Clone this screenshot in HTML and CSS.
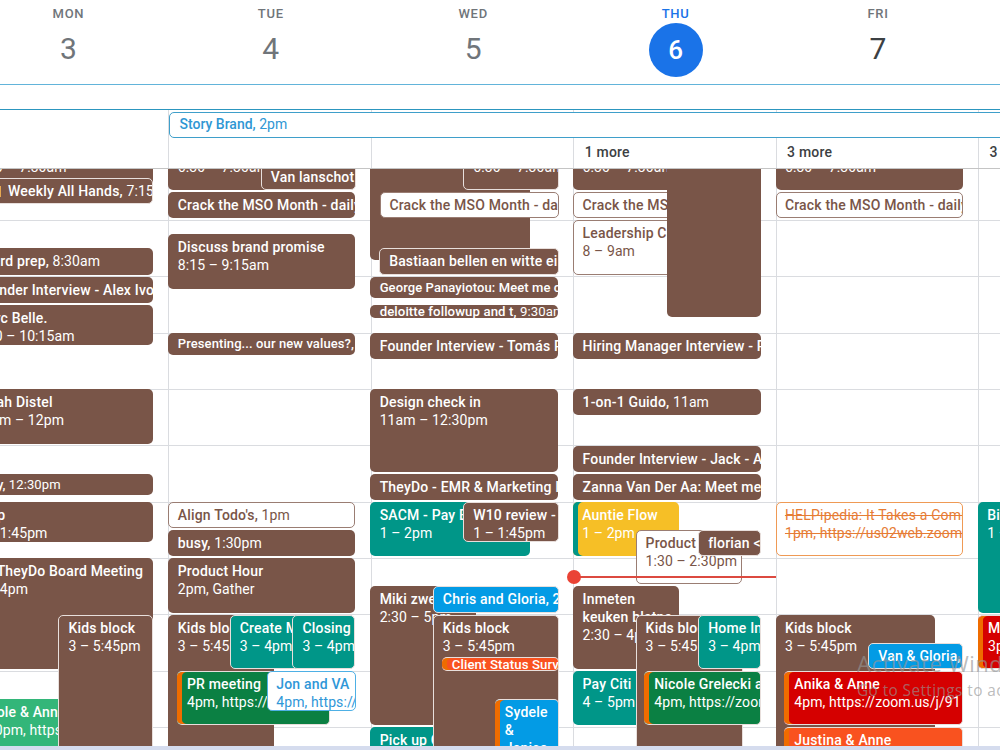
FILE: index.html
```html
<!DOCTYPE html>
<html lang="en">
<head>
    <meta charset="UTF-8">
    <meta name="viewport" content="width=device-width, initial-scale=1.0">
    <title>Calendar - Week</title>
    <link rel="stylesheet" href="styles.css">
</head>
<body>
    <div class="calendar">
        <!-- Day names and dates -->
        <header class="week days">
            <div class="day-head past"><span class="name">MON</span><span class="date">3</span></div>
            <div class="day-head past"><span class="name">TUE</span><span class="date">4</span></div>
            <div class="day-head past"><span class="name">WED</span><span class="date">5</span></div>
            <div class="day-head today"><span class="name">THU</span><span class="date">6</span></div>
            <div class="day-head"><span class="name">FRI</span><span class="date">7</span></div>
        </header>

        <!-- All-day events -->
        <section class="allday">
            <div class="allday-bar"></div>
            <div class="allday-rows">
                <div class="allday-event"><b>Story Brand,</b> 2pm</div>
                <div class="week allday-cells">
                    <div class="cell"></div>
                    <div class="cell"></div>
                    <div class="cell"></div>
                    <div class="cell"><span class="more">1 more</span></div>
                    <div class="cell"><span class="more">3 more</span></div>
                    <div class="cell"><span class="more">3 more</span></div>
                </div>
            </div>
        </section>

        <!-- Hour grid, filled by script.js -->
        <main class="week grid" id="grid"></main>
        <div class="scrollbar"></div>
    </div>

    <div class="watermark">
        <div class="watermark-title">Activate Windows</div>
        <div class="watermark-text">Go to Settings to activate Windows.</div>
    </div>

    <script src="script.js"></script>
</body>
</html>
```

FILE: styles.css
```css
/* General Styles */
* {
    box-sizing: border-box;
}

body {
    font-family: Roboto, "Liberation Sans", sans-serif;
    font-size: 14px;
    margin: 0;
    background: #fff;
    color: #3c4043;
    overflow: hidden;
}

.calendar {
    display: flex;
    flex-direction: column;
    height: 750px;
    overflow: hidden;
}

/* Six day columns, Monday is partly scrolled out */
.week {
    display: grid;
    grid-template-columns: repeat(6, 202.4px);
    margin-left: -34px;
    width: 1215px;
}

/* Header */
.days {
    height: 84px;
    flex: none;
}

.day-head {
    display: flex;
    flex-direction: column;
    align-items: center;
    padding: 6px 0 0 2.4px;
}

.name {
    font-size: 13px;
    font-weight: 500;
    line-height: 15px;
    letter-spacing: 0.7px;
    color: #70757a;
}

.date {
    width: 54px;
    height: 54px;
    margin-top: 2px;
    border-radius: 50%;
    font-size: 30px;
    line-height: 52px;
    text-align: center;
}

.past .date {
    color: #70757a;
}

.today .name {
    color: #1a73e8;
}

.today .date {
    background: #1a73e8;
    color: #fff;
    font-size: 26px;
    font-weight: 500;
    line-height: 54px;
}

/* All-day area */
.allday {
    flex: none;
    height: 85px;
    border-bottom: 1px solid #c4c4c4;
}

.allday-bar {
    height: 26px;
    border-top: 1px solid #62b4da;
    border-bottom: 1px solid #2c96bf;
}

.allday-rows {
    display: grid;
    grid-template-columns: 169px 1fr;
    grid-template-rows: 2px 26px 30px;
}

.allday-cells {
    grid-row: 1 / 4;
    grid-column: 1 / 3;
}

.cell {
    display: flex;
    align-items: flex-end;
    padding: 0 0 6px 10.5px;
    border-left: 1px solid #dadce0;
}

.more {
    font-weight: 500;
    line-height: 19px;
    letter-spacing: 0.2px;
}

.allday-event {
    grid-row: 2;
    grid-column: 2;
    z-index: 1;
    margin-right: -10px;
    padding-left: 9.5px;
    border: 1px solid #3f9fca;
    border-radius: 5px;
    background: #fff;
    color: #2f97d4;
    line-height: 23px;
}

b {
    font-weight: 500;
}

/* Hour grid */
.grid {
    flex: 1;
    min-height: 0;
    overflow: hidden;
}

.day {
    position: relative;
    border-left: 1px solid #dadce0;
    background: repeating-linear-gradient(#dadce0 0 1px, transparent 1px 56.35px) 0 51px no-repeat;
    min-width: 0;
}

/* Events overlap, so they are placed by time */
.event {
    position: absolute;
    padding: 4px 0 0 9.3px;
    border-radius: 5px;
    overflow: hidden;
    white-space: nowrap;
    line-height: 18px;
    letter-spacing: 0.1px;
    color: #fff;
    background: #795548;
}

.event b {
    display: block;
    letter-spacing: 0.18px;
}

.event.inline b {
    display: inline;
}

.event.small {
    font-size: 13px;
    line-height: 19px;
    padding-top: 1px;
}

.event.tiny {
    font-size: 13.2px;
    line-height: 13px;
    padding-top: 0;
}

.event.small b,
.event.tiny b {
    letter-spacing: 0.1px;
}

.event.wrap {
    white-space: normal;
}

.event.ring {
    border: 1px solid #e8dfdc;
    padding: 3px 0 0 9px;
}

.event.strip {
    border: 1px solid #e8dfdc;
    border-left: none;
    padding: 3px 0 0 10px;
    box-shadow: inset 5px 0 #ef6c00;
}

.event.strip.tiny {
    padding-top: 0;
}

.event.strip-teal {
    border: none;
    padding: 4px 0 0 9px;
    box-shadow: inset 5px 0 #009688;
}

/* Event colors */
.teal {
    background: #009688;
}

.green {
    background: #0b8043;
}

.mint {
    background: #33b679;
}

.blue {
    background: #039be5;
}

.red {
    background: #d50000;
}

.orange {
    background: #f9521f;
}

.yellow {
    background: #f6bf26;
}

/* Invitations that are not answered yet */
.event.open {
    background: #fff;
    border: 1px solid #9a7d73;
    color: #795548;
    padding: 3px 0 0 8.3px;
}

.event.open.open-blue {
    border-color: #4eb0e5;
    color: #2f97d8;
}

.event.open.declined {
    border-color: #ef9a55;
    color: #e67c35;
    text-decoration: line-through;
}

.event.declined b {
    font-weight: 400;
    letter-spacing: 0.2px;
}

.badge {
    display: inline-block;
    width: 25px;
    height: 11px;
    margin-right: 7px;
    vertical-align: -1px;
    background: #e8a951;
}

/* Current time */
.now {
    position: absolute;
    left: 0;
    right: 0;
    height: 2px;
    background: #dc4a40;
}

.now::before {
    content: "";
    position: absolute;
    left: -7px;
    top: -6px;
    width: 14px;
    height: 14px;
    border-radius: 50%;
    background: #ea4335;
}

.grid .day:nth-child(4) {
    z-index: 1;
}

.scrollbar {
    flex: none;
    height: 4px;
    background: #d5dcee;
}

/* System overlay */
.watermark {
    position: absolute;
    left: 857px;
    top: 649px;
    width: 143px;
    overflow: hidden;
    white-space: nowrap;
    font-family: "Open Sans", sans-serif;
    color: rgba(150, 150, 150, 0.65);
}

.watermark-title {
    font-size: 22px;
    line-height: 28px;
    letter-spacing: 0.5px;
}

.watermark-text {
    font-size: 15.4px;
    line-height: 28px;
    letter-spacing: 0.4px;
}
```

FILE: script.js
```js
const HOUR = 56.35;
const FIRST_LINE = 8;    // the first visible hour line is 8am
const FIRST_TOP = 51.2;

// [start, end, left, width, classes, title, details]
const days = [
    [
        [6.5, 7.5, 0, 187, "", "Standup", "6:30 – 7:30am"],
        [7.25, 7.75, 0, 187, "ring inline", "<i class='badge'></i>Weekly All Hands,", "7:15am"],
        [8.5, 9, 0, 187, "inline", "Board prep,", "8:30am"],
        [9, 9.5, 0, 187, "inline", "Founder Interview - Alex Ivo", ""],
        [9.5, 10.25, 0, 187, "", "Marc Belle.", "9:30 – 10:15am"],
        [11, 12, 0, 187, "", "Sarah Distel", "11am – 12pm"],
        [12.5, 12.92, 0, 187, "inline small", "busy,", "12:30pm"],
        [13, 13.75, 0, 187, "", "Prep", "1 – 1:45pm"],
        [14, 16, 0, 187, "", "Q4 TheyDo Board Meeting", "2 – 4pm"],
        [16.5, 18, 0, 150, "mint", "Nicole &amp; Anne", "4:30pm, https://zoom.us"],
        [15, 17.75, 92.4, 95, "ring", "Kids block", "3 – 5:45pm"]
    ],
    [
        [6.5, 7.5, 0, 187, "", "Standup", "6:30 – 7:30am"],
        [7, 7.5, 92.4, 95, "ring inline", "Van lanschot", ""],
        [7.5, 8, 0, 187, "inline", "Crack the MSO Month - daily", ""],
        [8.25, 9.25, 0, 187, "", "Discuss brand promise", "8:15 – 9:15am"],
        [10, 10.42, 0, 187, "inline small", "Presenting... our new values?,", "10am"],
        [13, 13.5, 0, 187, "open inline", "Align Todo's,", "1pm"],
        [13.5, 14, 0, 187, "inline", "busy,", "1:30pm"],
        [14, 15, 0, 187, "", "Product Hour", "2pm, Gather"],
        [15, 17.75, 0, 106, "", "Kids block", "3 – 5:45pm"],
        [15, 16, 61.3, 80, "teal ring", "Create M", "3 – 4pm"],
        [15, 16, 124, 63, "teal ring", "Closing", "3 – 4pm"],
        [16, 17, 8.5, 153, "green strip", "PR meeting", "4pm, https://zoom.us"],
        [16, 16.75, 98.5, 89, "open open-blue", "Jon and VA", "4pm, https://"]
    ],
    [
        [6, 8.75, -0.5, 160, "", "", ""],
        [6.5, 7.5, 92.4, 96, "ring", "Standup", "6:30 – 7:30am"],
        [7.5, 8, 9.3, 178.5, "open inline", "Crack the MSO Month - daily", ""],
        [8.5, 9, 8.3, 179.5, "ring inline", "Bastiaan bellen en witte ei", ""],
        [9, 9.42, -0.5, 188, "inline small", "George Panayiotou: Meet me c", ""],
        [9.5, 9.77, -0.5, 188, "inline tiny", "deloitte followup and t,", "9:30am"],
        [10, 10.5, -0.5, 188, "inline", "Founder Interview - Tomás P", ""],
        [11, 12.5, -0.5, 188, "", "Design check in", "11am – 12:30pm"],
        [12.5, 13, -0.5, 188, "inline", "TheyDo - EMR &amp; Marketing I", ""],
        [13, 14, -0.5, 160, "teal", "SACM - Pay E", "1 – 2pm"],
        [13, 13.75, 92.4, 95.5, "ring", "W10 review -", "1 – 1:45pm"],
        [14.5, 17, -0.5, 106, "", "Miki zwemmen", "2:30 – 5pm"],
        [17, 18, -0.5, 100, "teal", "Pick up C", ""],
        [14.5, 15, 62, 126, "blue ring inline", "Chris and Gloria, 2", ""],
        [15, 17.75, 62, 126, "ring", "Kids block", "3 – 5:45pm"],
        [15.75, 16.04, 71, 117, "orange strip inline tiny", "Client Status Surve", ""],
        [16.5, 18, 124, 64, "blue strip wrap", "Sydele &amp; Janice", ""]
    ],
    [
        [6.5, 7.5, 0, 188, "", "Standup", "6:30 – 7:30am"],
        [7.5, 8, 0, 120, "open inline", "Crack the MSO Month", ""],
        [8, 9, 0, 120, "open", "Leadership Call", "8 – 9am"],
        [6, 9.75, 94, 94, "", "", ""],
        [10, 10.5, 0, 188, "inline", "Hiring Manager Interview - R", ""],
        [11, 11.5, 0, 188, "inline", "1-on-1 Guido,", "11am"],
        [12, 12.5, 0, 188, "inline", "Founder Interview - Jack - A", ""],
        [12.5, 13, 0, 188, "inline", "Zanna Van Der Aa: Meet me", ""],
        [13, 14, 0, 106, "yellow strip strip-teal", "Auntie Flow", "1 – 2pm"],
        [13.5, 14.5, 63, 106, "open", "Product", "1:30 – 2:30pm"],
        [13.5, 14, 125, 63, "ring inline", "florian &lt;&gt;", ""],
        [14.5, 16, 0, 106, "wrap", "Inmeten keuken blatna", "2:30 – 4pm"],
        [16, 17, 0, 100, "teal", "Pay Citi", "4 – 5pm"],
        [15, 17.75, 62.4, 107, "ring", "Kids block", "3 – 5:45pm"],
        [15, 16, 125, 63, "teal ring", "Home Inspection", "3 – 4pm"],
        [16, 17, 71, 117, "green strip", "Nicole Grelecki and", "4pm, https://zoom.us"]
    ],
    [
        [6.5, 7.5, 0, 187.5, "", "Standup", "6:30 – 7:30am"],
        [7.5, 8, 0, 187.5, "open inline", "Crack the MSO Month - daily", ""],
        [13, 14, 0, 187.5, "open declined", "HELPipedia: It Takes a Community", "1pm, https://us02web.zoom.us"],
        [15, 17.75, 0, 159, "", "Kids block", "3 – 5:45pm"],
        [15.5, 16, 92.7, 95, "blue ring inline", "Van &amp; Gloria,", ""],
        [16, 17, 8.7, 179, "red strip", "Anika &amp; Anne", "4pm, https://zoom.us/j/91"],
        [17, 18, 8.7, 179, "orange strip", "Justina &amp; Anne", "5pm"]
    ],
    [
        [13, 15, 0, 187, "teal", "Birthday", "1 – 3pm"],
        [15, 16, 0, 187, "red strip", "Meeting", "3pm"]
    ]
];

const grid = document.getElementById("grid");

function toTop(time) {
    return FIRST_TOP + (time - FIRST_LINE) * HOUR;
}

days.forEach((events, index) => {
    const day = document.createElement("div");
    day.className = "day";

    events.forEach(([start, end, left, width, classes, title, details]) => {
        const event = document.createElement("div");
        event.className = "event " + classes;
        event.style.top = toTop(start) + "px";
        event.style.height = (end - start) * HOUR - 2 + "px";
        event.style.left = left - 0.95 + "px";
        event.style.width = width + "px";
        event.innerHTML = `<b>${title}</b> ${details}`;
        day.appendChild(event);
    });

    // Thursday is today
    if (index === 3) {
        const now = document.createElement("div");
        now.className = "now";
        now.style.top = toTop(14.32) + "px";
        day.appendChild(now);
    }

    grid.appendChild(day);
});
```
